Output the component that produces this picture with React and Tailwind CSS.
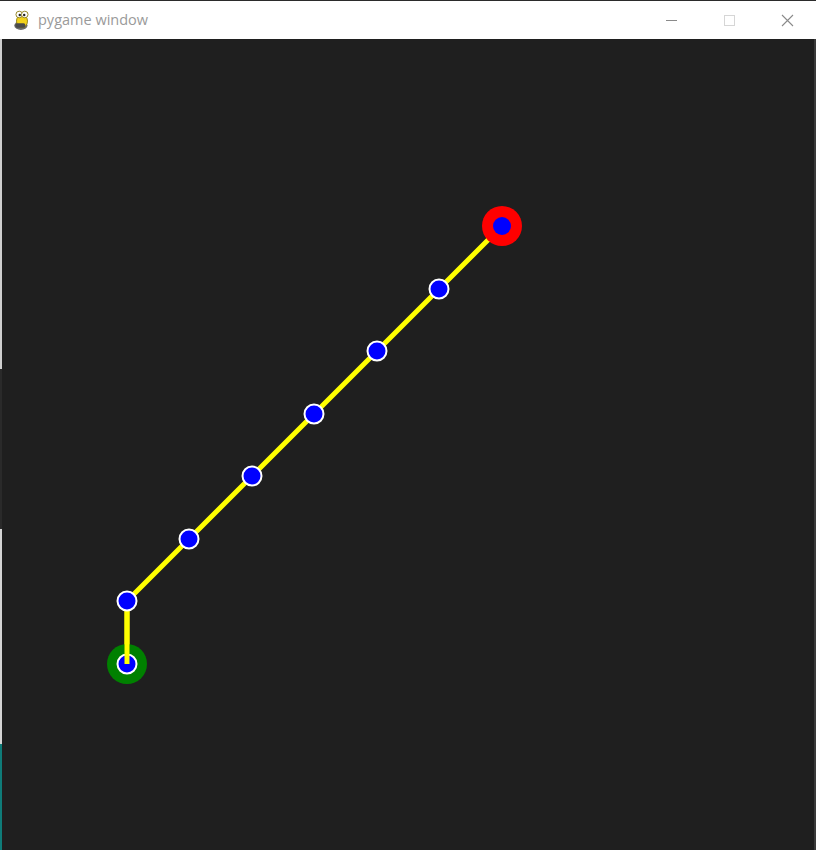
import React from "react";

// chain of joints, page coordinates (svg viewBox is offset to match)
const joints = [
  [127, 664],
  [127, 601],
  [189, 539],
  [252, 476],
  [314, 414],
  [377, 351],
  [439, 289],
  [502, 226],
];

const PygameIcon = () => (
  <svg width="20" height="22" viewBox="0 0 18 20">
    <ellipse cx="8" cy="15" rx="6" ry="4" fill="#6b6b6b" />
    <ellipse cx="9" cy="11" rx="5" ry="6" fill="#f2d21b" stroke="#8a7a10" strokeWidth="0.8" />
    <circle cx="6.5" cy="5" r="3" fill="#fff" stroke="#8a7a10" strokeWidth="0.8" />
    <circle cx="11.5" cy="5" r="3" fill="#fff" stroke="#8a7a10" strokeWidth="0.8" />
    <circle cx="7" cy="5.5" r="1.1" fill="#222" />
    <circle cx="11" cy="5.5" r="1.1" fill="#222" />
    <rect x="3" y="13" width="9" height="4" rx="1.5" fill="#4a4a4a" />
  </svg>
);

const TitleBar = () => (
  <div className="h-[39px] bg-white border-t border-[#2b2b2b] flex items-center pl-[12px]">
    <PygameIcon />
    <span className="ml-[6px] text-[14.5px] text-[#9a9a9a] font-['Segoe_UI','Open_Sans',sans-serif] leading-none">
      pygame window
    </span>
    <div className="ml-auto flex items-center h-full">
      <div className="w-[58px] h-full flex items-center justify-center">
        <div className="w-[11px] h-px bg-[#8a8a8a]" />
      </div>
      <div className="w-[58px] h-full flex items-center justify-center">
        <div className="w-[11px] h-[11px] border border-[#d6d6d6]" />
      </div>
      <div className="w-[58px] h-full flex items-center justify-center">
        <svg width="13" height="13" viewBox="0 0 13 13">
          <path d="M1 1L12 12M12 1L1 12" stroke="#8a8a8a" strokeWidth="1.1" />
        </svg>
      </div>
    </div>
  </div>
);

export default function App() {
  const pts = joints.map((p) => p.join(",")).join(" ");
  const [bx, by] = joints[0];
  const [tx, ty] = joints[joints.length - 1];
  return (
    <div className="w-[816px] h-[850px] overflow-hidden flex flex-col bg-[#1f1f1f]">
      <TitleBar />
      <div className="flex flex-1">
        <div className="w-[2px] flex flex-col">
          <div className="h-[330px] bg-[#cfcfcf]" />
          <div className="h-[160px] bg-[#2a2a2a]" />
          <div className="h-[215px] bg-[#d4d4d4]" />
          <div className="flex-1 bg-[#0f7b78]" />
        </div>
        <div className="flex-1 bg-[#1f1f1f]">
          <svg width="812" height="811" viewBox="2 39 812 811" className="block">
            <polyline points={pts} fill="none" stroke="#ffff00" strokeWidth="5" />
            <circle cx={tx} cy={ty} r="20" fill="#ff0000" />
            <circle cx={bx} cy={by} r="20" fill="#008000" />
            <circle cx={bx} cy={by} r="9.5" fill="#0000ff" stroke="#ffffff" strokeWidth="2" />
            <polyline points={`${bx},${by} ${bx},${by - 63}`} fill="none" stroke="#ffff00" strokeWidth="5" />
            {joints.slice(1, -1).map(([x, y], i) => (
              <circle key={i} cx={x} cy={y} r="9.5" fill="#0000ff" stroke="#ffffff" strokeWidth="2" />
            ))}
            <circle cx={tx} cy={ty} r="9" fill="#0000ff" />
          </svg>
        </div>
        <div className="w-[2px] bg-[#3a3a3a]" />
      </div>
    </div>
  );
}
